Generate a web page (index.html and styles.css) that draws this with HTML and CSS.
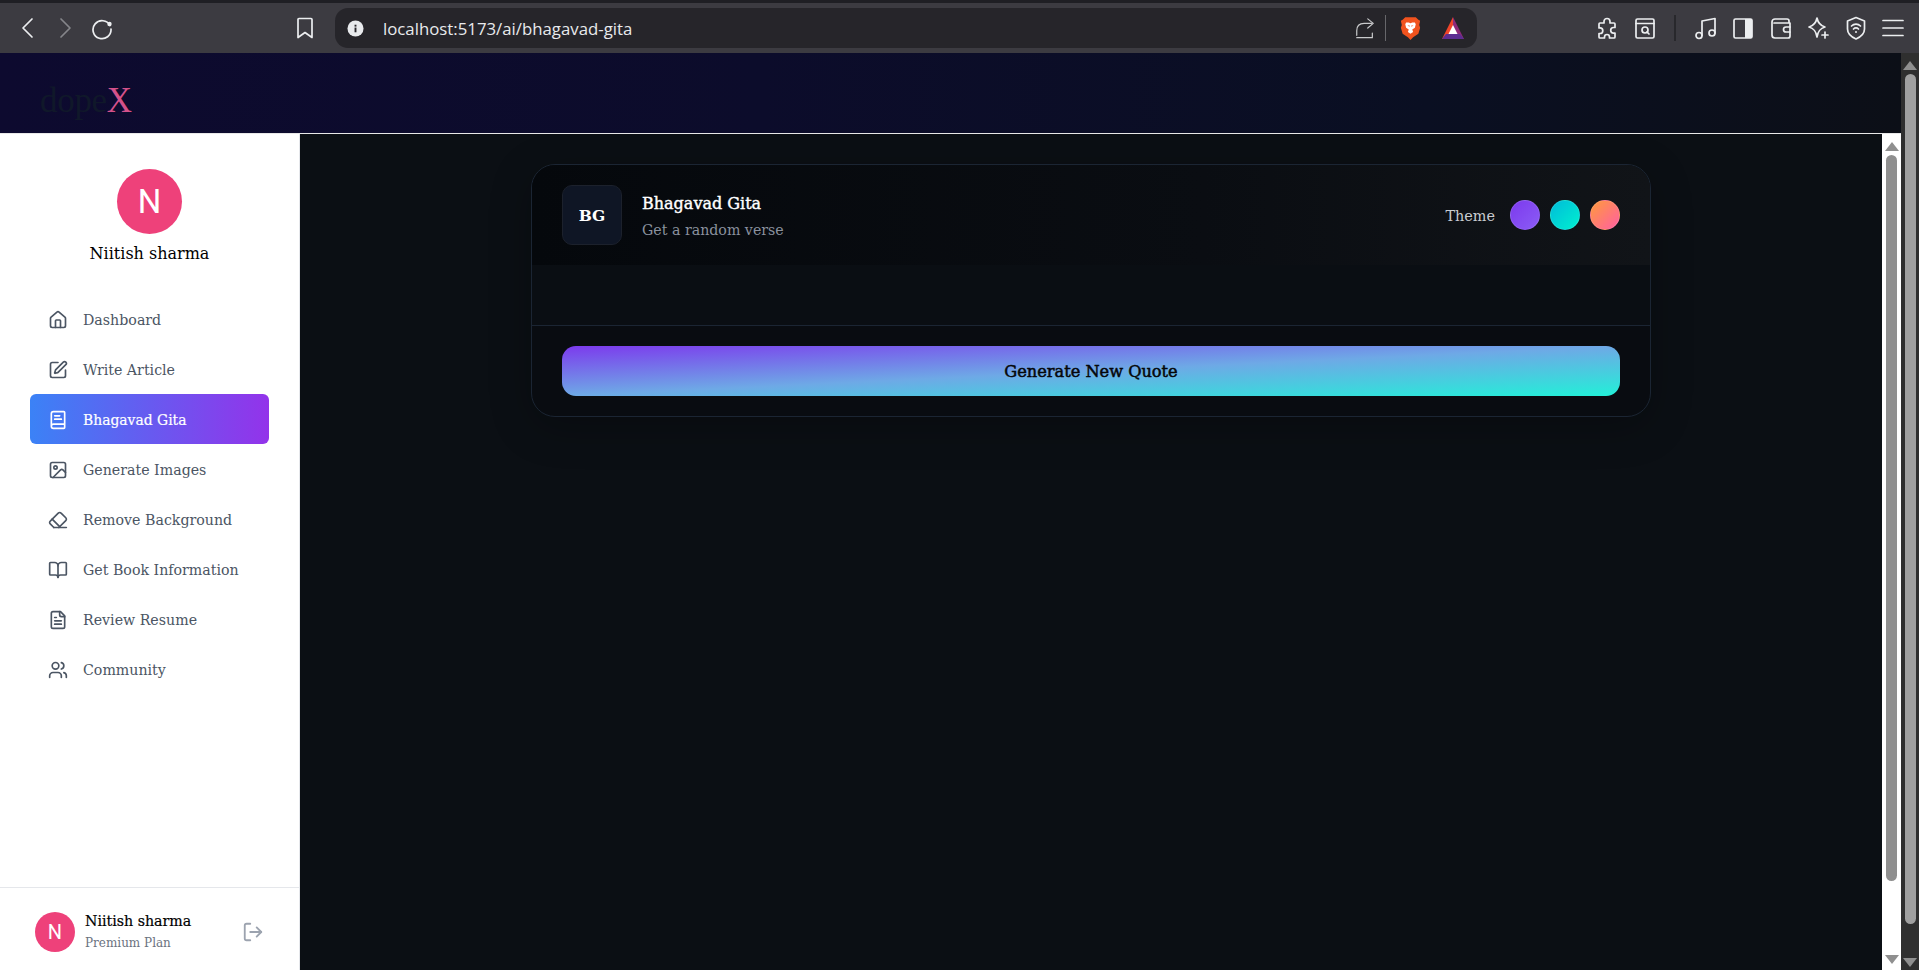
FILE: index.html
```html
<!DOCTYPE html>
<html lang="en">
<head>
<meta charset="utf-8">
<title>Bhagavad Gita</title>
<link rel="stylesheet" href="styles.css">
</head>
<body>
<div class="browser">
  <div class="tabstrip"></div>
  <header class="toolbar">
    <div class="nav-buttons">
      <svg class="tb-icon" viewBox="0 0 24 24"><path d="M16 3 7 12l9 9"/></svg>
      <svg class="tb-icon dim" viewBox="0 0 24 24"><path d="m8 3 9 9-9 9"/></svg>
      <svg class="tb-icon" viewBox="0 0 24 24"><path d="M20 9.500A9 9 0 1 0 21 13"/><circle class="fill" cx="19.500" cy="8" r="2.200"/></svg>
    </div>
    <svg class="tb-icon bookmark" viewBox="0 0 24 24"><path d="M6 2.500h12a1 1 0 0 1 1 1v18l-7-5-7 5v-18a1 1 0 0 1 1-1z"/></svg>
    <div class="urlbar">
      <svg class="info" viewBox="0 0 18 18"><circle cx="9" cy="9" r="8.500"/><rect x="8" y="8" width="2" height="5"/><rect x="8" y="5" width="2" height="2"/></svg>
      <span class="url">localhost:5173/ai/bhagavad-gita</span>
      <svg class="tb-icon share" viewBox="0 0 24 24"><path d="M3 20v-5c0-5 3-8 8-8h8"/><path d="m15 2 6 5-6 5"/><path d="M3 22.500h17v-5"/></svg>
      <span class="url-sep"></span>
      <svg class="brave" viewBox="0 0 24 28"><path class="lion" d="M6 1h12l3 3 2 1-1 5 1 3-2 7-6 4-3 3-3-3-6-4-2-7 1-3-1-5 2-1z"/><path class="lion-face" d="M7 7h3l2 1 2-1h3l1 2-1 4-3 2 1 3-3 2-3-2 1-3-3-2-1-4z"/><path class="lion" d="M8.500 10.500h2.500v1.500zM15.500 10.500H13V12z"/></svg>
      <svg class="bat" viewBox="0 0 24 24"><path class="bat-a" d="M12 1 1 23h11z"/><path class="bat-b" d="M12 1l11 22H12z"/><path class="bat-c" d="M1 23l4-5h14l4 5z"/><path class="bat-d" d="M12 9l4.500 9h-9z"/></svg>
    </div>
    <div class="ext-icons">
      <svg class="tb-icon" viewBox="0 0 24 24"><path d="M9 5.500a3 3 0 1 1 6 0V7h4a1 1 0 0 1 1 1v3.500h-1.500a2.800 2.800 0 0 0 0 5.600H20V21a1 1 0 0 1-1 1h-4.500v-1a2.500 2.500 0 0 0-5 0v1H5a1 1 0 0 1-1-1v-3.500h1a2.800 2.800 0 0 0 0-5.600H4V8a1 1 0 0 1 1-1h4z"/></svg>
      <svg class="tb-icon" viewBox="0 0 24 24"><rect x="3" y="3" width="18" height="19" rx="1.500"/><path d="M3 7.500h18"/><circle cx="12" cy="14" r="3"/><path d="m14 16 2 2"/></svg>
      <span class="tb-sep"></span>
      <svg class="tb-icon" viewBox="0 0 24 24"><path d="M8 19.500V5l13-2.500V17"/><circle cx="5" cy="19.500" r="3"/><circle cx="18" cy="17" r="3"/></svg>
      <svg class="tb-icon" viewBox="0 0 24 24"><rect x="3" y="3" width="18" height="19" rx="1.500"/><rect class="fill" x="14" y="3" width="7" height="19"/></svg>
      <svg class="tb-icon" viewBox="0 0 24 24"><path d="M20 7V5a2 2 0 0 0-2-2H6a3 3 0 0 0-3 3v13a3 3 0 0 0 3 3h13a2 2 0 0 0 2-2V7H5"/><path d="M21 11h-4a2 2 0 0 0 0 5h4"/></svg>
      <svg class="tb-icon" viewBox="0 0 24 24"><path d="M11 2c1 5 3 7.500 8 9-5 1.500-7 4-8 10-1-6-3-8.500-8-10 5-1.500 7-4 8-9z"/><path d="M19 16v6M16 19h6"/></svg>
      <svg class="tb-icon" viewBox="0 0 24 24"><path d="M12 1.500 20.500 5v8c0 5-4 8-8.500 10C7.500 21 3.500 18 3.500 13V5z"/><path d="M7.500 10a6.500 6.500 0 0 1 9 0M9.500 13a3.500 3.500 0 0 1 5 0"/><circle class="fill" cx="12" cy="16" r="1"/></svg>
      <svg class="tb-icon" viewBox="0 0 24 24"><path d="M2 4.500h20M2 12h20M2 19.500h20"/></svg>
    </div>
  </header>

  <div class="viewport">
    <div class="page">
      <nav class="navbar">
        <div class="logo"><span class="logo-dope">dope</span><span class="logo-x">X</span></div>
      </nav>
      <div class="app">
        <aside class="sidebar">
          <div class="sidebar-top">
            <div class="profile">
              <div class="avatar avatar-lg">N</div>
              <h1 class="profile-name">Niitish sharma</h1>
            </div>
            <ul class="menu">
              <li class="menu-item"><svg class="icon" viewBox="0 0 24 24"><path d="M15 21v-8a1 1 0 0 0-1-1h-4a1 1 0 0 0-1 1v8"/><path d="M3 10a2 2 0 0 1 .709-1.528l7-5.999a2 2 0 0 1 2.582 0l7 5.999A2 2 0 0 1 21 10v9a2 2 0 0 1-2 2H5a2 2 0 0 1-2-2z"/></svg>Dashboard</li>
              <li class="menu-item"><svg class="icon" viewBox="0 0 24 24"><path d="M12 3H5a2 2 0 0 0-2 2v14a2 2 0 0 0 2 2h14a2 2 0 0 0 2-2v-7"/><path d="M18.375 2.625a1 1 0 0 1 3 3l-9.013 9.014a2 2 0 0 1-.853.505l-2.873.84a.5.5 0 0 1-.62-.62l.84-2.873a2 2 0 0 1 .506-.852z"/></svg>Write Article</li>
              <li class="menu-item active"><svg class="icon" viewBox="0 0 24 24"><path d="M4 19.500v-15A2.500 2.500 0 0 1 6.500 2H19a1 1 0 0 1 1 1v18a1 1 0 0 1-1 1H6.500a2.500 2.500 0 0 1 0-5H20"/><path d="M8 11h8"/><path d="M8 7h6"/></svg>Bhagavad Gita</li>
              <li class="menu-item"><svg class="icon" viewBox="0 0 24 24"><rect x="3" y="3" width="18" height="18" rx="2"/><circle cx="9" cy="9" r="2"/><path d="m21 15-3.086-3.086a2 2 0 0 0-2.828 0L6 21"/></svg>Generate Images</li>
              <li class="menu-item"><svg class="icon" viewBox="0 0 24 24"><path d="m7 21-4.300-4.300c-1-1-1-2.500 0-3.400l9.600-9.600c1-1 2.500-1 3.400 0l5.600 5.600c1 1 1 2.500 0 3.400L13 21"/><path d="M22 21H7"/><path d="m5 11 9 9"/></svg>Remove Background</li>
              <li class="menu-item"><svg class="icon" viewBox="0 0 24 24"><path d="M12 7v14"/><path d="M3 18a1 1 0 0 1-1-1V4a1 1 0 0 1 1-1h5a4 4 0 0 1 4 4 4 4 0 0 1 4-4h5a1 1 0 0 1 1 1v13a1 1 0 0 1-1 1h-6a3 3 0 0 0-3 3 3 3 0 0 0-3-3z"/></svg>Get Book Information</li>
              <li class="menu-item"><svg class="icon" viewBox="0 0 24 24"><path d="M15 2H6a2 2 0 0 0-2 2v16a2 2 0 0 0 2 2h12a2 2 0 0 0 2-2V7Z"/><path d="M14 2v4a2 2 0 0 0 2 2h4"/><path d="M10 9H8"/><path d="M16 13H8"/><path d="M16 17H8"/></svg>Review Resume</li>
              <li class="menu-item"><svg class="icon" viewBox="0 0 24 24"><path d="M16 21v-2a4 4 0 0 0-4-4H6a4 4 0 0 0-4 4v2"/><circle cx="9" cy="7" r="4"/><path d="M22 21v-2a4 4 0 0 0-3-3.870"/><path d="M16 3.130a4 4 0 0 1 0 7.750"/></svg>Community</li>
            </ul>
          </div>
          <div class="sidebar-foot">
            <div class="avatar avatar-sm">N</div>
            <div class="foot-text">
              <div class="foot-name">Niitish sharma</div>
              <div class="foot-plan">Premium Plan</div>
            </div>
            <svg class="icon logout" viewBox="0 0 24 24"><path d="M9 21H5a2 2 0 0 1-2-2V5a2 2 0 0 1 2-2h4"/><polyline points="16 17 21 12 16 7"/><line x1="21" x2="9" y1="12" y2="12"/></svg>
          </div>
        </aside>
        <main class="main">
          <section class="card">
            <div class="card-head">
              <div class="badge">BG</div>
              <div class="card-title">
                <h2 class="title">Bhagavad Gita</h2>
                <p class="subtitle">Get a random verse</p>
              </div>
              <div class="theme">
                <span class="theme-label">Theme</span>
                <span class="dot dot-purple"></span>
                <span class="dot dot-teal"></span>
                <span class="dot dot-sunset"></span>
              </div>
            </div>
            <div class="card-body"></div>
            <div class="card-foot">
              <button class="generate">Generate New Quote</button>
            </div>
          </section>
        </main>
        <div class="scrollbar scrollbar-inner">
          <span class="arrow-up"></span>
          <span class="thumb"></span>
          <span class="arrow-down"></span>
        </div>
      </div>
    </div>
    <div class="scrollbar scrollbar-outer">
      <span class="arrow-up"></span>
      <span class="thumb"></span>
      <span class="arrow-down"></span>
    </div>
  </div>
</div>
</body>
</html>
```
FILE: styles.css
```css
* { box-sizing: border-box; }
html, body { margin: 0; height: 100%; overflow: hidden; }
body { font-family: "DejaVu Serif", "Liberation Serif", serif; }
.browser { display: flex; flex-direction: column; height: 100vh; }

/* browser chrome */
.tabstrip { height: 3px; background: #1f1f24; }
.toolbar { height: 50px; background: #3c3b41; display: flex; align-items: center; padding-left: 16px; }
.nav-buttons { display: flex; gap: 13px; flex: none; width: 277px; }
.tb-icon { width: 24px; height: 24px; fill: none; stroke: #eceef0; stroke-width: 1.7; stroke-linecap: round; stroke-linejoin: round; flex: none; }
.tb-icon .fill { fill: #eceef0; stroke: none; }
.tb-icon.dim { stroke: #85868a; }
.bookmark { margin-right: 18px; }
.urlbar { flex: none; width: 1142px; height: 40px; background: #26252a; border-radius: 13px; display: flex; align-items: center; padding-left: 12px; }
.info { width: 17px; height: 17px; fill: #e8eaed; flex: none; }
.info rect { fill: #26252a; }
.url { margin-left: 19px; width: 975px; font: 16.800px "Open Sans", sans-serif; color: #e8eaed; white-space: nowrap; }
.share { stroke-width: 1.300; stroke: #c9cacc; width: 22px; height: 22px; margin-left: -4px; }
.url-sep { width: 1px; height: 26px; background: #67676b; margin-left: 9px; }
.brave { width: 21px; height: 27px; margin-left: 14px; flex: none; }
.lion { fill: #f1531e; }
.lion-face { fill: #fff; }
.bat { width: 24px; height: 24px; margin-left: 20px; flex: none; }
.bat-a { fill: #f0452a; }
.bat-b { fill: #8e2a7a; }
.bat-c { fill: #5c2d91; }
.bat-d { fill: #fff; }
.ext-icons { flex: none; display: flex; align-items: center; gap: 13.500px; margin-left: 118px; }
.tb-sep { width: 2px; height: 26px; background: #28282c; margin: 0 4px; }

/* page */
.viewport { flex: 1; display: flex; min-height: 0; }
.page { flex: 1; display: flex; flex-direction: column; min-width: 0; }
.navbar { height: 81px; flex: none; background: linear-gradient(90deg, #0d0a2f 0%, #0c0c2b 40%, #0a0f22 75%, #0c0f17 100%); border-bottom: 1px solid #e8e8e8; display: flex; align-items: center; padding: 14px 0 0 40px; }
.logo { font: 35px "Liberation Serif", serif; line-height: 1; letter-spacing: -0.300px; }
.logo-dope { color: #10182a; }
.logo-x { color: #d4518a; }
.app { flex: 1; display: flex; min-height: 0; }

/* sidebar */
.sidebar { width: 300px; flex: none; background: #fff; border-right: 1px solid #e5e7eb; display: flex; flex-direction: column; justify-content: space-between; }
.sidebar-top { padding: 35px 30px 0; }
.profile { display: flex; flex-direction: column; align-items: center; }
.avatar { border-radius: 50%; background: #ee417a; color: #fff; display: flex; align-items: center; justify-content: center; font-family: Roboto, sans-serif; font-weight: 400; }
.avatar-lg { width: 65px; height: 65px; font-size: 33px; }
.avatar-sm { width: 40px; height: 40px; font-size: 20px; flex: none; }
.profile-name { margin: 8px 0 0; font-size: 16px; font-weight: 400; line-height: 24px; color: #000; }
.menu { list-style: none; margin: 28px 0 0; padding: 0; }
.menu-item { height: 50px; display: flex; align-items: center; gap: 15px; padding: 2px 0 0 18px; border-radius: 6px; font-size: 14.200px; color: #4b5563; }
.menu-item.active { background: linear-gradient(90deg, #3b82f6, #9333ea); color: #fff; font-size: 13.900px; -webkit-text-stroke: 0.200px #fff; }
.icon { width: 20px; height: 20px; fill: none; stroke: currentColor; stroke-width: 2; stroke-linecap: round; stroke-linejoin: round; flex: none; }
.sidebar-foot { height: 83px; border-top: 1px solid #e5e7eb; display: flex; align-items: center; padding: 5px 35px 0 35px; }
.foot-text { margin-left: 10px; flex: 1; }
.foot-name { font-size: 14.200px; line-height: 20px; color: #000; -webkit-text-stroke: 0.200px #000; }
.foot-plan { font-size: 12px; line-height: 18px; color: #6b7280; margin-top: 3px; }
.logout { width: 22px; height: 22px; color: #9ca3af; }

/* main */
.main { flex: 1; min-width: 0; background: #0b0f14; padding-top: 30px; display: flex; flex-direction: column; align-items: center; }
.card { width: 1120px; border: 1px solid #1b2533; border-radius: 24px; background: #090c11; overflow: hidden; box-shadow: 0 10px 40px rgba(0, 0, 0, 0.25); }
.card-head { height: 100px; display: flex; align-items: center; padding: 0 30px; background: linear-gradient(90deg, #05080c, #0a0d12 60%, #111418); }
.badge { width: 60px; height: 60px; border-radius: 10px; background: #0f1625; border: 1px solid #1c212c; color: #fff; font-weight: 700; font-size: 15.500px; display: flex; align-items: center; justify-content: center; }
.card-title { margin-left: 20px; flex: 1; padding-top: 2px; }
.title { margin: 0; font-size: 16px; line-height: 24px; font-weight: 400; color: #fff; -webkit-text-stroke: 0.400px #fff; }
.subtitle { margin: 4px 0 0; font-size: 14.200px; line-height: 20px; color: #8a919e; }
.theme { display: flex; align-items: center; gap: 10px; }
.theme-label { font-size: 14.400px; color: #c9ccd1; margin-right: 5px; padding-top: 1px; }
.dot { width: 30px; height: 30px; border-radius: 50%; border: 1px solid rgba(255, 255, 255, 0.12); }
.dot-purple { background: linear-gradient(135deg, #7c3aed, #8b5cf6); }
.dot-teal { background: linear-gradient(135deg, #00bcd9, #00f0d0); }
.dot-sunset { background: linear-gradient(135deg, #ff9a3c, #ff5fa2); }
.card-body { height: 61px; background: #0a0e13; border-bottom: 1px solid #1b2533; }
.card-foot { padding: 20px 30px; }
.generate { display: block; width: 100%; height: 50px; border: 0; border-radius: 14px; background: linear-gradient(to bottom right, #7c3aed, #6ea9e6 50%, #22f0d8); color: #05070a; font-family: inherit; font-size: 16.200px; font-weight: 400; -webkit-text-stroke: 0.500px #05070a; }

/* scrollbars */
.scrollbar { flex: none; display: flex; flex-direction: column; align-items: center; }
.scrollbar-inner { width: 19px; background: #fff; padding: 8px 0 6px; }
.scrollbar-outer { width: 18px; background: #2f2f2f; padding: 8px 0 3px; }
.thumb { flex: 1; width: 11px; border-radius: 6px; background: #8f8f8f; margin: 4px 0 74px; }
.scrollbar-outer .thumb { background: #a0a0a0; margin: 4px 0 34px; }
.arrow-up, .arrow-down { width: 0; height: 0; border-left: 7px solid transparent; border-right: 7px solid transparent; }
.arrow-up { border-bottom: 9px solid #8f8f8f; }
.arrow-down { border-top: 9px solid #8f8f8f; }
```
